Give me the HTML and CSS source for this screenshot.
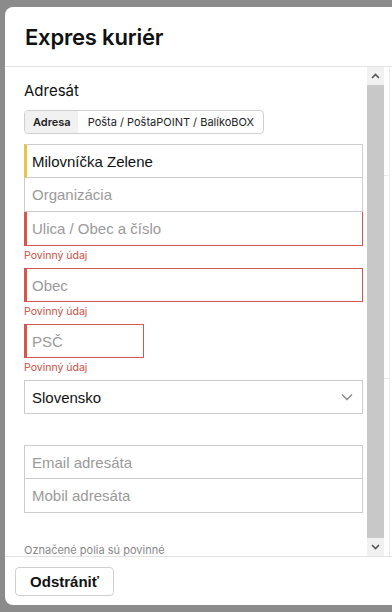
FILE: index.html
```html
<!DOCTYPE html>
<html lang="sk">
<head>
    <meta charset="UTF-8">
    <meta name="viewport" content="width=device-width, initial-scale=1.0">
    <title>Expres kuriér</title>
    <link rel="stylesheet" href="styles.css">
</head>
<body>
    <div class="modal">
        <div class="modal-header">
            <h2>Expres kuriér</h2>
        </div>

        <div class="modal-body">
            <div class="content">
                <p class="section-title">Adresát</p>
                <div class="switch">
                    <span class="switch-item active">Adresa</span>
                    <span class="switch-item">Pošta / PoštaPOINT / BalíkoBOX</span>
                </div>

                <div class="field-group">
                    <input type="text" class="field field-filled" value="Milovníčka Zelene">
                    <input type="text" class="field" placeholder="Organizácia">
                    <input type="text" class="field field-error" placeholder="Ulica / Obec a číslo">
                </div>
                <p class="error">Povinný údaj</p>

                <input type="text" class="field field-error" placeholder="Obec">
                <p class="error">Povinný údaj</p>

                <input type="text" class="field field-error field-short" placeholder="PSČ">
                <p class="error">Povinný údaj</p>

                <div class="field select">
                    <span>Slovensko</span>
                    <svg width="12" height="8" viewBox="0 0 12 8"><path d="M1 1.5l5 5 5-5" fill="none" stroke="#888" stroke-width="1.4"/></svg>
                </div>

                <div class="field-group contact">
                    <input type="text" class="field" placeholder="Email adresáta">
                    <input type="text" class="field" placeholder="Mobil adresáta">
                </div>

                <p class="note">Označené polia sú povinné</p>
            </div>

            <div class="scrollbar">
                <div class="scroll-btn">
                    <svg width="9" height="6" viewBox="0 0 9 6"><path d="M1 5l3.5-3.5L8 5" fill="none" stroke="#555" stroke-width="1.6"/></svg>
                </div>
                <div class="scroll-thumb"></div>
                <div class="scroll-btn">
                    <svg width="9" height="6" viewBox="0 0 9 6"><path d="M1 1l3.5 3.5L8 1" fill="none" stroke="#555" stroke-width="1.6"/></svg>
                </div>
            </div>
            <div class="behind">
                <div class="behind-line"></div>
                <div class="behind-line low"></div>
            </div>
        </div>

        <div class="modal-footer">
            <button class="btn">Odstrániť</button>
        </div>
    </div>
</body>
</html>
```

FILE: styles.css
```css
body {
    margin: 0;
    height: 612px;
    overflow: hidden;
    background-color: #8b8b8b;
    font-family: 'Inter', 'Liberation Sans', sans-serif;
    color: #111;
}
.modal {
    margin: 7px 0 0 5px;
    width: 400px;
    height: 598px;
    background: #fff;
    border-radius: 8px;
    display: flex;
    flex-direction: column;
    overflow: hidden;
}
.modal-header {
    height: 59px;
    border-bottom: 1px solid #e2e2e2;
    padding-left: 20px;
    display: flex;
    align-items: center;
    flex-shrink: 0;
}
.modal-header h2 {
    margin: 0;
    font-size: 22px;
    font-weight: 600;
    letter-spacing: -0.2px;
}
.modal-body {
    height: 489px;
    display: flex;
    flex-shrink: 0;
}
.content {
    width: 339px;
    flex-shrink: 0;
    padding: 14px 4px 0 19px;
    overflow: hidden;
}
.section-title {
    margin: 0 0 9px;
    font-size: 15px;
    line-height: 20px;
}
.switch {
    display: inline-flex;
    border: 1px solid #cfcfcf;
    border-radius: 4px;
    overflow: hidden;
    height: 22px;
    margin-bottom: 10px;
}
.switch-item {
    display: flex;
    align-items: center;
    padding: 0 9px 0 10px;
    font-size: 11px;
    color: #222;
}
.switch-item.active {
    background: #f1f1f1;
    font-weight: 600;
    font-size: 11px;
    padding: 0 7px 0 8px;
}
.field-group {
    display: flex;
    flex-direction: column;
}
.field {
    display: block;
    box-sizing: border-box;
    width: 100%;
    height: 34px;
    margin: 0;
    padding: 0 8px 0 7px;
    border: 1px solid #cccccc;
    background: #fff;
    font-family: 'Liberation Sans', Arial, sans-serif;
    font-size: 15px;
    color: #111;
    outline: none;
}
.field::placeholder {
    color: #9a9a9a;
}
.field-group .field + .field {
    border-top: none;
}
.field-group .field-error {
    border-top: 1px solid #d4574e;
}
.field-filled {
    border-left: 3px solid #e8c547;
    padding-left: 5px;
}
.field-error {
    border-color: #d4574e;
    border-left: 3px solid #d4574e;
    padding-left: 5px;
}
.field-short {
    width: 120px;
}
.error {
    margin: 3px 0 5px;
    font-size: 10.5px;
    line-height: 14px;
    color: #cc4a40;
}
.select {
    display: flex;
    align-items: center;
    justify-content: space-between;
    padding-right: 9px;
}
.contact {
    margin-top: 31px;
}
.note {
    margin: 30px 0 0;
    font-size: 11px;
    line-height: 14px;
    color: #888;
}
.scrollbar {
    width: 17px;
    display: flex;
    flex-direction: column;
    flex-shrink: 0;
}
.scroll-btn {
    height: 18px;
    background: #f1f1f1;
    display: flex;
    align-items: center;
    justify-content: center;
}
.scroll-thumb {
    flex: 1;
    background: #c8c8c8;
}
.behind {
    width: 5px;
    border-right: 1px solid #ececec;
    flex-shrink: 0;
}
.behind-line {
    margin-top: 108px;
    border-top: 1px solid #ececec;
}
.behind-line.low {
    margin-top: 202px;
}
.modal-footer {
    flex: 1;
    border-top: 1px solid #e2e2e2;
    padding: 10px 0 0 10px;
}
.btn {
    width: 99px;
    height: 29px;
    background: #fff;
    border: 1px solid #cfcfcf;
    border-radius: 4px;
    font-family: 'Liberation Sans', Arial, sans-serif;
    font-size: 15px;
    font-weight: bold;
    color: #111;
}
```
